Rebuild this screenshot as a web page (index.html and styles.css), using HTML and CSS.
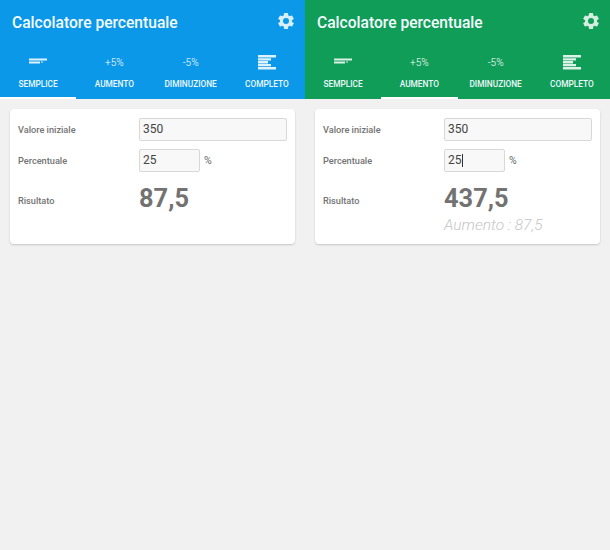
FILE: index.html
```html
<!DOCTYPE html>
<html lang="it">
<head>
<meta charset="utf-8">
<title>Calcolatore percentuale</title>
<link rel="stylesheet" href="styles.css">
</head>
<body>
<div class="screens">
  <section class="panel panel-blue">
    <header class="appbar">
      <div class="titlebar">
        <h1 class="title">Calcolatore percentuale</h1>
        <svg class="gear" viewBox="0 0 24 24"><path d="M19.14 12.94c.04-.3.06-.61.06-.94s-.02-.64-.07-.94l2.03-1.58a.5.5 0 0 0 .12-.61l-1.92-3.32a.5.5 0 0 0-.59-.22l-2.39.96a7 7 0 0 0-1.62-.94l-.36-2.54a.48.48 0 0 0-.48-.41h-3.84a.47.47 0 0 0-.47.41l-.36 2.54c-.59.24-1.13.57-1.62.94l-2.39-.96a.49.49 0 0 0-.59.22L2.74 8.87a.48.48 0 0 0 .12.61l2.03 1.58c-.05.3-.09.63-.09.94s.02.64.07.94l-2.03 1.58a.5.5 0 0 0-.12.61l1.92 3.32c.12.22.37.29.59.22l2.39-.96c.5.38 1.03.7 1.62.94l.36 2.54c.05.24.24.41.48.41h3.84c.24 0 .44-.17.47-.41l.36-2.54c.59-.24 1.13-.56 1.62-.94l2.39.96c.22.08.47 0 .59-.22l1.92-3.32a.48.48 0 0 0-.12-.61l-2-1.58zM12 15.6a3.6 3.6 0 1 1 0-7.2 3.6 3.6 0 0 1 0 7.2z"/></svg>
      </div>
      <nav class="tabs">
        <div class="tab tab-active">
          <span class="tab-top"><svg class="ico-simple" viewBox="0 0 18 6"><path d="M0 .5h18v2H0zM0 3.5h11v2H0zM12 3.5h2v1h-2z"/></svg></span>
          <span class="tab-label">SEMPLICE</span>
        </div>
        <div class="tab">
          <span class="tab-top">+5%</span>
          <span class="tab-label">AUMENTO</span>
        </div>
        <div class="tab">
          <span class="tab-top">-5%</span>
          <span class="tab-label">DIMINUZIONE</span>
        </div>
        <div class="tab">
          <span class="tab-top"><svg class="ico-full" viewBox="0 0 18 15"><path d="M0 0h18v2.6H0zM0 3.2h13v2.3H0zM0 6.1h10v2.3H0zM0 9h13v2.3H0zM0 11.9h18v2.7H0z"/></svg></span>
          <span class="tab-label">COMPLETO</span>
        </div>
      </nav>
    </header>
    <main class="content">
      <div class="card">
        <div class="row row-first">
          <span class="label">Valore iniziale</span>
          <span class="field field-wide">350</span>
        </div>
        <div class="row">
          <span class="label">Percentuale</span>
          <span class="field field-short">25</span>
          <span class="unit">%</span>
        </div>
        <div class="row row-result">
          <span class="label">Risultato</span>
          <div class="result">
            <span class="value">87,5</span>
          </div>
        </div>
      </div>
    </main>
  </section>
  <section class="panel panel-green">
    <header class="appbar">
      <div class="titlebar">
        <h1 class="title">Calcolatore percentuale</h1>
        <svg class="gear" viewBox="0 0 24 24"><path d="M19.14 12.94c.04-.3.06-.61.06-.94s-.02-.64-.07-.94l2.03-1.58a.5.5 0 0 0 .12-.61l-1.92-3.32a.5.5 0 0 0-.59-.22l-2.39.96a7 7 0 0 0-1.62-.94l-.36-2.54a.48.48 0 0 0-.48-.41h-3.84a.47.47 0 0 0-.47.41l-.36 2.54c-.59.24-1.13.57-1.62.94l-2.39-.96a.49.49 0 0 0-.59.22L2.74 8.87a.48.48 0 0 0 .12.61l2.03 1.58c-.05.3-.09.63-.09.94s.02.64.07.94l-2.03 1.58a.5.5 0 0 0-.12.61l1.92 3.32c.12.22.37.29.59.22l2.39-.96c.5.38 1.03.7 1.62.94l.36 2.54c.05.24.24.41.48.41h3.84c.24 0 .44-.17.47-.41l.36-2.54c.59-.24 1.13-.56 1.62-.94l2.39.96c.22.08.47 0 .59-.22l1.92-3.32a.48.48 0 0 0-.12-.61l-2-1.58zM12 15.6a3.6 3.6 0 1 1 0-7.2 3.6 3.6 0 0 1 0 7.2z"/></svg>
      </div>
      <nav class="tabs">
        <div class="tab">
          <span class="tab-top"><svg class="ico-simple" viewBox="0 0 18 6"><path d="M0 .5h18v2H0zM0 3.5h11v2H0zM12 3.5h2v1h-2z"/></svg></span>
          <span class="tab-label">SEMPLICE</span>
        </div>
        <div class="tab tab-active">
          <span class="tab-top">+5%</span>
          <span class="tab-label">AUMENTO</span>
        </div>
        <div class="tab">
          <span class="tab-top">-5%</span>
          <span class="tab-label">DIMINUZIONE</span>
        </div>
        <div class="tab">
          <span class="tab-top"><svg class="ico-full" viewBox="0 0 18 15"><path d="M0 0h18v2.6H0zM0 3.2h13v2.3H0zM0 6.1h10v2.3H0zM0 9h13v2.3H0zM0 11.9h18v2.7H0z"/></svg></span>
          <span class="tab-label">COMPLETO</span>
        </div>
      </nav>
    </header>
    <main class="content">
      <div class="card">
        <div class="row row-first">
          <span class="label">Valore iniziale</span>
          <span class="field field-wide">350</span>
        </div>
        <div class="row">
          <span class="label">Percentuale</span>
          <span class="field field-short">25<i class="caret"></i></span>
          <span class="unit">%</span>
        </div>
        <div class="row row-result">
          <span class="label">Risultato</span>
          <div class="result">
            <span class="value">437,5</span>
            <span class="delta">Aumento : 87,5</span>
          </div>
        </div>
      </div>
    </main>
  </section>
</div>
</body>
</html>
```
FILE: styles.css
```css
* { box-sizing: border-box; }
html, body { margin: 0; padding: 0; }
body {
  width: 610px;
  height: 550px;
  overflow: hidden;
  background: #f1f1f1;
  font-family: Roboto, "Liberation Sans", sans-serif;
}
.screens { display: flex; height: 550px; }
.panel { width: 305px; display: flex; flex-direction: column; }
.panel-blue .appbar { background: #0b98e8; }
.panel-green .appbar { background: #109d58; }
.appbar { height: 99px; color: #fff; display: flex; flex-direction: column; }
.titlebar {
  height: 44px;
  padding: 0 9px 0 12px;
  display: flex;
  align-items: center;
  justify-content: space-between;
}
.title { margin: 1px 0 0; font-size: 15.6px; font-weight: 500; line-height: 44px; color: #f4fbfe; }
.gear { width: 20px; height: 20px; fill: #d6effb; margin-top: -2px; }
.panel-green .gear { fill: #d3eede; }
.tabs { flex: 1; display: grid; grid-template-columns: repeat(4, 1fr); }
.tab {
  display: flex;
  flex-direction: column;
  align-items: center;
  border-bottom: 2px solid transparent;
}
.tab-active { border-bottom-color: #fff; }
.tab-top {
  height: 27px;
  margin-top: 5px;
  display: flex;
  align-items: center;
  justify-content: center;
  font-size: 10px;
  font-weight: 300;
}
.tab-label { margin-top: 1px; font-size: 8.3px; line-height: 14px; font-weight: 500; color: #eef8fd; }
.ico-simple { width: 18px; height: 6px; fill: #dff2fc; margin-top: -3px; }
.ico-full { width: 18px; height: 15px; fill: #dff2fc; margin-top: -1px; }
.panel-green .ico-simple, .panel-green .ico-full { fill: #dcf2e6; }
.content { padding: 10px; }
.card {
  height: 135px;
  padding: 8.5px 8px 0;
  background: #fff;
  border-radius: 4px;
  box-shadow: 0 1px 2px rgba(0, 0, 0, 0.18);
}
.row { display: flex; align-items: center; margin-bottom: 8px; height: 23px; }
.label { width: 121px; flex: none; font-size: 9.2px; font-weight: 500; color: #737373; }
.field {
  height: 23px;
  padding: 0 3px;
  display: flex;
  align-items: center;
  font-size: 12px;
  color: #444;
  background: #f8f8f8;
  border: 1px solid #d8d8d8;
  border-radius: 2px;
}
.field-wide { width: 148px; }
.field-short { width: 61px; }
.caret { width: 1px; height: 13px; background: #333; }
.unit { margin-left: 4px; font-size: 10.5px; color: #666; }
.row-result { margin-top: 16px; height: auto; align-items: flex-start; }
.row-result .label { margin-top: 7px; }
.result { display: flex; flex-direction: column; margin-top: -5px; }
.value { font-size: 25.4px; line-height: 30px; font-weight: 700; color: #727272; }
.delta { margin-top: 2px; font-size: 15.5px; line-height: 20px; font-style: italic; font-weight: 300; color: #c6c6c6; }
```
